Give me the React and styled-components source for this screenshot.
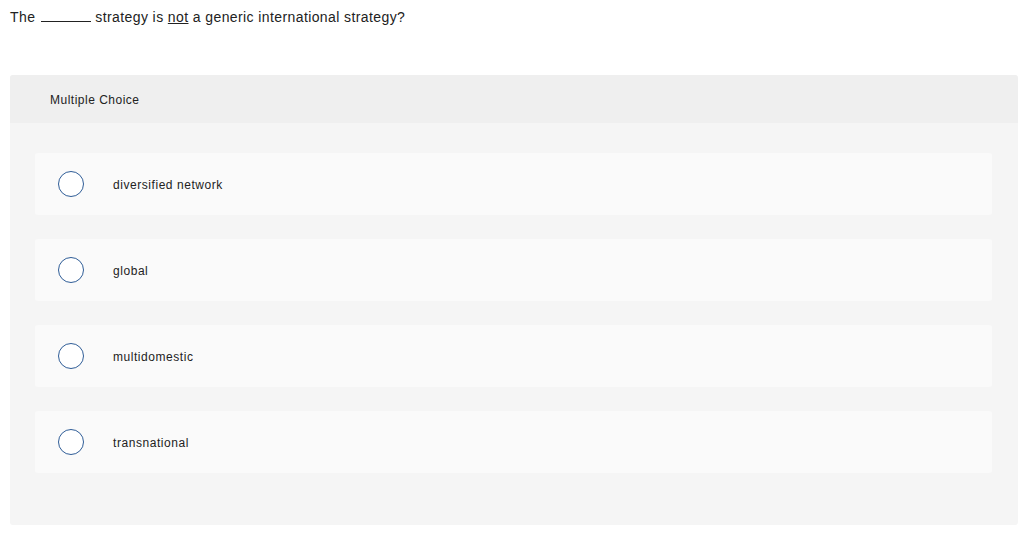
import React from 'react';
import styled, { createGlobalStyle } from 'styled-components';

const GlobalStyle = createGlobalStyle`
  body {
    margin: 0;
    background: #fff;
    font-family: 'Liberation Sans', Arial, sans-serif;
    color: #222;
  }
`;

const Page = styled.div`
  padding: 7px 6px 0 10px;
`;

const Question = styled.p`
  margin: 0;
  font-size: 14px;
  line-height: 20px;
  letter-spacing: 0.4px;
  color: #222;
`;

const Blank = styled.span`
  display: inline-block;
  width: 50px;
  border-bottom: 1px solid #222;
  margin: 0 4px 0 6px;
  vertical-align: baseline;
`;

const Under = styled.span`
  text-decoration: underline;
`;

const Panel = styled.section`
  margin-top: 48px;
  background: #f5f5f5;
  border-radius: 3px;
  overflow: hidden;
`;

const PanelHeader = styled.div`
  height: 48px;
  display: flex;
  align-items: center;
  padding: 2px 0 0 40px;
  box-sizing: border-box;
  background: #efefef;
  font-size: 12px;
  letter-spacing: 0.5px;
  color: #222;
`;

const Choices = styled.div`
  display: flex;
  flex-direction: column;
  gap: 24px;
  padding: 30px 26px 52px 25px;
`;

const Choice = styled.label`
  display: flex;
  align-items: center;
  height: 62px;
  background: #fafafa;
  border-radius: 3px;
  padding-left: 23px;
  font-size: 12px;
  letter-spacing: 0.55px;
  color: #222;
  cursor: pointer;
`;

const Radio = styled.span`
  width: 24px;
  height: 24px;
  border: 1px solid #2f5d97;
  border-radius: 50%;
  background: #fff;
  flex-shrink: 0;
  margin-right: 29px;
`;

const ChoiceText = styled.span`
  padding-top: 2px;
`;

const options = ['diversified network', 'global', 'multidomestic', 'transnational'];

export default function App() {
  return (
    <Page>
      <GlobalStyle />
      <Question>
        The<Blank />strategy is <Under>not</Under> a generic international strategy?
      </Question>
      <Panel>
        <PanelHeader>Multiple Choice</PanelHeader>
        <Choices>
          {options.map((o) => (
            <Choice key={o}>
              <Radio />
              <ChoiceText>{o}</ChoiceText>
            </Choice>
          ))}
        </Choices>
      </Panel>
    </Page>
  );
}
